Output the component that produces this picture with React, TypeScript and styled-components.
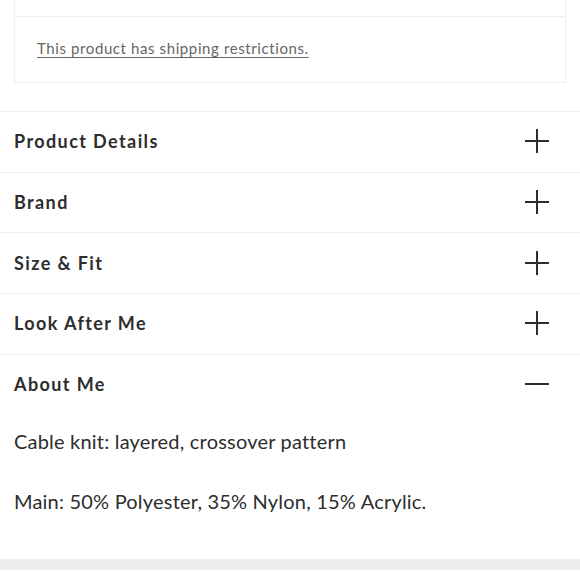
import React from "react";
import styled, { createGlobalStyle } from "styled-components";

const GlobalStyle = createGlobalStyle`
  body {
    margin: 0;
    background: #fff;
    font-family: Lato, "Noto Sans", sans-serif;
    color: #2d2d2d;
  }
`;

const Page = styled.div`
  width: 580px;
  height: 580px;
  overflow: hidden;
  display: flex;
  flex-direction: column;
`;

const InfoBox = styled.div`
  margin: 0 14px;
  border: 1px solid #eeeeee;
  border-top: none;
`;

const InfoCell = styled.div<{ $height: number }>`
  height: ${({ $height }) => $height}px;
  display: flex;
  align-items: center;
  padding: 0 22px 3px;
  box-sizing: border-box;
  & + & {
    border-top: 1px solid #eeeeee;
  }
`;

const RestrictionLink = styled.a`
  font-size: 15px;
  letter-spacing: 0.6px;
  color: #666666;
  text-decoration: underline;
  text-underline-offset: 3px;
  cursor: pointer;
`;

const Accordion = styled.div`
  margin-top: 28px;
`;

const Section = styled.div`
  border-top: 1px solid #eeeeee;
`;

const Header = styled.button`
  width: 100%;
  height: 59.7px;
  border: none;
  background: none;
  padding: 0 14px 1px;
  display: flex;
  align-items: center;
  justify-content: space-between;
  font-family: inherit;
  font-size: 18px;
  font-weight: 700;
  letter-spacing: 1.4px;
  color: #2d2d2d;
  cursor: pointer;
`;

const Icon = styled.svg`
  width: 26px;
  height: 26px;
  margin-right: 16px;
`;

const Body = styled.div`
  padding: 12px 14px 43px;
`;

const Para = styled.p`
  margin: 0;
  font-size: 20px;
  line-height: 30px;
  letter-spacing: 0.2px;
  color: #2d2d2d;
  & + & {
    margin-top: 30px;
  }
`;

const Footer = styled.div`
  height: 11px;
  background: #eeeeee;
`;

const Toggle = ({ open }: { open: boolean }) => (
  <Icon viewBox="0 0 26 26">
    <path d="M1 13h24" stroke="#2d2d2d" strokeWidth="2" />
    {!open && <path d="M13 1v24" stroke="#2d2d2d" strokeWidth="2" />}
  </Icon>
);

const sections = ["Product Details", "Brand", "Size & Fit", "Look After Me"];

export default function App() {
  const [open, setOpen] = React.useState("About Me");

  return (
    <Page>
      <GlobalStyle />
      <InfoBox>
        <InfoCell $height={16} />
        <InfoCell $height={66}>
          <RestrictionLink>This product has shipping restrictions.</RestrictionLink>
        </InfoCell>
      </InfoBox>
      <Accordion>
        {sections.map((title) => (
          <Section key={title}>
            <Header onClick={() => setOpen(open === title ? "" : title)}>
              {title}
              <Toggle open={open === title} />
            </Header>
          </Section>
        ))}
        <Section>
          <Header onClick={() => setOpen(open === "About Me" ? "" : "About Me")}>
            About Me
            <Toggle open={open === "About Me"} />
          </Header>
          {open === "About Me" && (
            <Body>
              <Para>Cable knit: layered, crossover pattern</Para>
              <Para>Main: 50% Polyester, 35% Nylon, 15% Acrylic.</Para>
            </Body>
          )}
        </Section>
      </Accordion>
      <Footer />
    </Page>
  );
}
